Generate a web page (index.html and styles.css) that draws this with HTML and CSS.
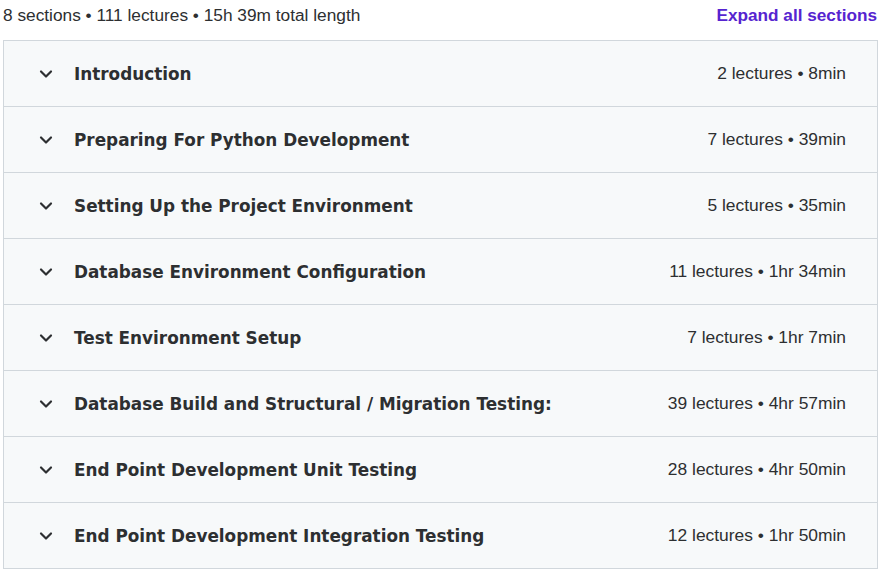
FILE: index.html
```html
<!DOCTYPE html>
<html lang="en">
<head>
    <meta charset="UTF-8">
    <title>Course content</title>
    <link rel="stylesheet" href="styles.css">
</head>
<body>
    <div class="curriculum">
        <div class="summary">
            <span>8 sections • 111 lectures • 15h 39m total length</span>
            <button class="expand-all">Expand all sections</button>
        </div>

        <div class="sections">
            <div class="section">
                <svg class="chevron" viewBox="0 0 24 24"><path d="M6 9l6 6 6-6"/></svg>
                <span class="title">Introduction</span>
                <span class="meta">2 lectures • 8min</span>
            </div>
            <div class="section">
                <svg class="chevron" viewBox="0 0 24 24"><path d="M6 9l6 6 6-6"/></svg>
                <span class="title">Preparing For Python Development</span>
                <span class="meta">7 lectures • 39min</span>
            </div>
            <div class="section">
                <svg class="chevron" viewBox="0 0 24 24"><path d="M6 9l6 6 6-6"/></svg>
                <span class="title">Setting Up the Project Environment</span>
                <span class="meta">5 lectures • 35min</span>
            </div>
            <div class="section">
                <svg class="chevron" viewBox="0 0 24 24"><path d="M6 9l6 6 6-6"/></svg>
                <span class="title">Database Environment Configuration</span>
                <span class="meta">11 lectures • 1hr 34min</span>
            </div>
            <div class="section">
                <svg class="chevron" viewBox="0 0 24 24"><path d="M6 9l6 6 6-6"/></svg>
                <span class="title">Test Environment Setup</span>
                <span class="meta">7 lectures • 1hr 7min</span>
            </div>
            <div class="section">
                <svg class="chevron" viewBox="0 0 24 24"><path d="M6 9l6 6 6-6"/></svg>
                <span class="title">Database Build and Structural / Migration Testing:</span>
                <span class="meta">39 lectures • 4hr 57min</span>
            </div>
            <div class="section">
                <svg class="chevron" viewBox="0 0 24 24"><path d="M6 9l6 6 6-6"/></svg>
                <span class="title">End Point Development Unit Testing</span>
                <span class="meta">28 lectures • 4hr 50min</span>
            </div>
            <div class="section">
                <svg class="chevron" viewBox="0 0 24 24"><path d="M6 9l6 6 6-6"/></svg>
                <span class="title">End Point Development Integration Testing</span>
                <span class="meta">12 lectures • 1hr 50min</span>
            </div>
        </div>
    </div>
</body>
</html>
```

FILE: styles.css
```css
body {
    margin: 0;
    background: #fff;
    color: #2d2f31;
    font-family: "Liberation Sans", Arial, sans-serif;
}
.curriculum {
    padding: 0 2px 0 3px;
}
.summary {
    display: flex;
    justify-content: space-between;
    align-items: center;
    height: 31px;
    margin-bottom: 9px;
    font-size: 17.3px;
}
.expand-all {
    background: none;
    border: none;
    padding: 0 1px 0 0;
    font-family: inherit;
    font-size: 17.2px;
    font-weight: bold;
    color: #5624d0;
    cursor: pointer;
}
.sections {
    border: 1px solid #d1d7dc;
    border-top: none;
}
.section {
    display: flex;
    align-items: center;
    height: 65px;
    border-top: 1px solid #d1d7dc;
    background: #f7f9fa;
    padding: 0 31px 0 32px;
}
.chevron {
    width: 20px;
    height: 20px;
    fill: none;
    stroke: #2d2f31;
    stroke-width: 2.6;
    stroke-linecap: round;
    stroke-linejoin: round;
    margin-right: 18px;
}
.title {
    flex: 1;
    font-family: "DejaVu Sans", sans-serif;
    font-size: 16.85px;
    font-weight: bold;
}
.meta {
    font-size: 17.4px;
}
```
